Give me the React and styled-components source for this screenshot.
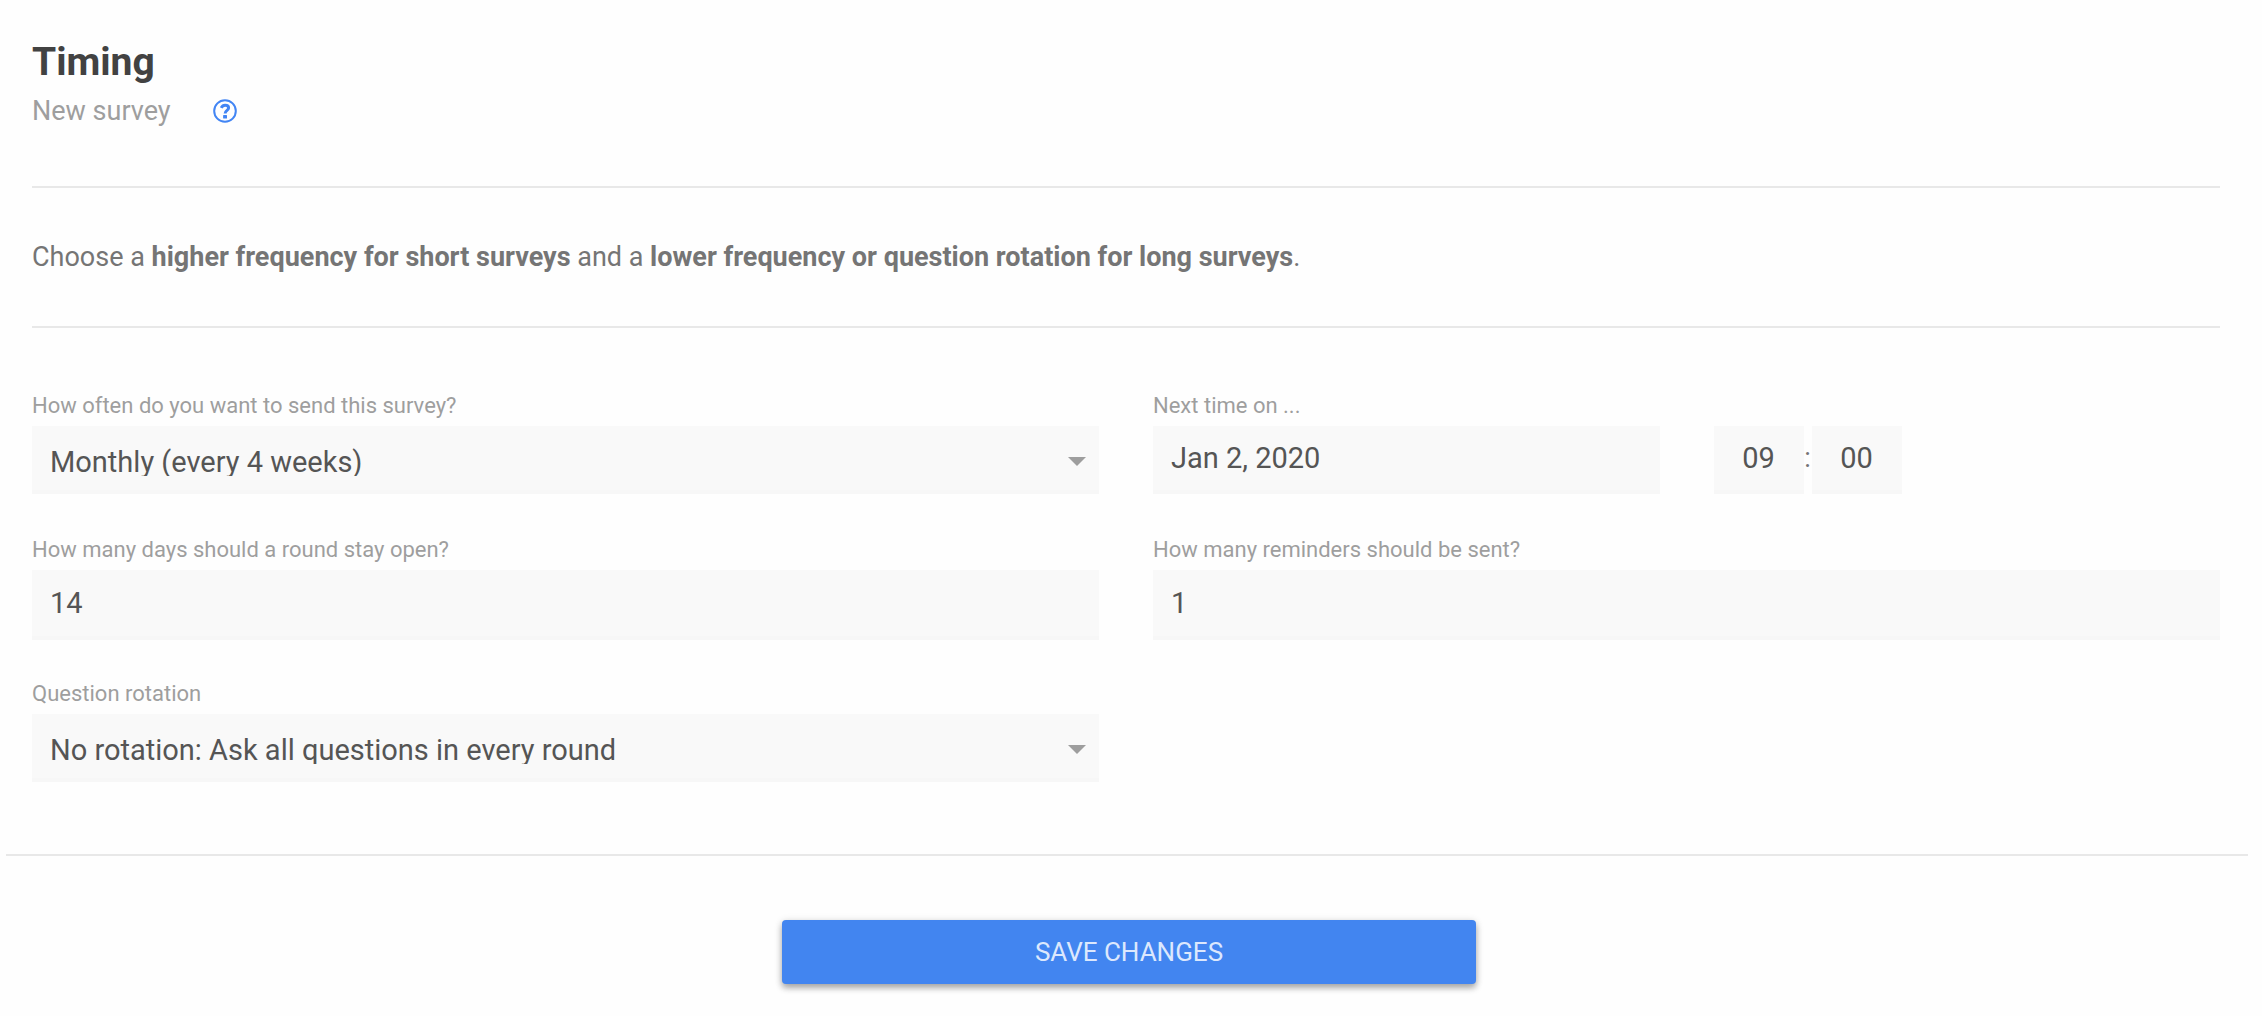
import React, { useState } from 'react';
import styled, { createGlobalStyle } from 'styled-components';

const GlobalStyle = createGlobalStyle`
  * {
    box-sizing: border-box;
  }

  body {
    margin: 0;
    background: #fefefe;
    color: #424242;
    font-family: Roboto, 'Liberation Sans', sans-serif;
  }
`;

const Form = styled.form`
  padding: 38px 14px 32px 6px;
`;

const Content = styled.div`
  padding: 0 28px 0 26px;
`;

const Title = styled.h1`
  margin: 0;
  font-size: 39px;
  line-height: 48px;
  font-weight: 700;
`;

const SubTitle = styled.div`
  display: flex;
  align-items: center;
  gap: 42px;
  height: 50px;
  color: #9e9e9e;
  font-size: 27px;
`;

const HelpButton = styled.button`
  display: flex;
  padding: 0;
  border: none;
  background: none;
  color: #4285f4;
  cursor: pointer;
`;

const Rule = styled.hr`
  margin: 0;
  border: none;
  border-top: 2px solid #e8e8e8;
`;

const Header = styled.header`
  padding-bottom: 50px;
`;

const Intro = styled.p`
  margin: 0;
  padding: 52px 0;
  color: #757575;
  font-size: 27px;
  line-height: 34px;
`;

const Fields = styled.div`
  display: grid;
  grid-template-columns: 1fr 1fr;
  grid-auto-rows: 102px;
  gap: 42px 54px;
  padding: 64px 0 72px;
`;

const Field = styled.div`
  min-width: 0;
`;

const Label = styled.label`
  display: block;
  padding-bottom: 6px;
  color: #9e9e9e;
  font-size: 22px;
  line-height: 28px;
`;

const Input = styled.input`
  display: block;
  width: 100%;
  height: 70px;
  padding: 0 18px;
  border: none;
  border-bottom: 4px solid #f7f7f7;
  border-radius: 0;
  outline: none;
  background: #f9f9f9;
  color: #555;
  font-family: inherit;
  font-size: 29px;
`;

const DateInput = styled(Input)`
  height: 68px;
`;

const TimeInput = styled(DateInput)`
  width: 90px;
  padding: 0;
  text-align: center;
`;

const SelectBox = styled.div`
  display: flex;
  align-items: flex-start;
  position: relative;
  height: 68px;
  border-bottom: 4px solid #f7f7f7;
  background: #f9f9f9;
`;

/* shorter than its box, so the descenders are cut */
const Select = styled.select`
  appearance: none;
  width: 100%;
  height: 50px;
  padding: 19px 60px 0 18px;
  border: none;
  outline: none;
  background: none;
  color: #555;
  font-family: inherit;
  font-size: 29px;
`;

const Arrow = styled.span`
  position: absolute;
  top: 31px;
  right: 13px;
  border: 9px solid transparent;
  border-top-color: #9e9e9e;
  border-bottom: none;
  pointer-events: none;
`;

const DateTime = styled.div`
  display: grid;
  grid-template-columns: 1fr 1fr;
  gap: 54px;
`;

const Time = styled.div`
  display: flex;
  align-items: center;
`;

const Colon = styled.span`
  width: 8px;
  padding-bottom: 4px;
  color: #757575;
  font-size: 27px;
  text-align: center;
`;

const Footer = styled.footer`
  display: flex;
  justify-content: center;
  padding: 64px 0 0 4px;
`;

const SaveButton = styled.button`
  width: 31%;
  height: 64px;
  border: none;
  border-radius: 4px;
  background: #4285f0;
  box-shadow: 0 4px 6px rgba(0, 0, 0, 0.3), 0 1px 8px rgba(0, 0, 0, 0.12);
  color: #dce8fd;
  font-family: inherit;
  font-size: 26px;
  text-transform: uppercase;
  cursor: pointer;
`;

const frequencies = ['Weekly', 'Every 2 weeks', 'Monthly (every 4 weeks)', 'Quarterly'];

const rotations = [
  'No rotation: Ask all questions in every round',
  'Rotate: Ask some questions in every round',
];

const HelpIcon = () => (
  <svg width="24" height="24" viewBox="0 0 24 24" fill="none" stroke="currentColor">
    <circle cx="12" cy="12" r="10.8" strokeWidth="2" />
    <path
      d="M8.2 8.9C9.2 7 10.4 6.3 12.1 6.3c2 0 3.5 1.1 3.5 2.7 0 2.5-3.5 2.3-3.5 5.6"
      strokeWidth="3"
    />
    <rect x="10.1" y="15.9" width="3.9" height="3.5" rx="0.5" fill="currentColor" stroke="none" />
  </svg>
);

const Dropdown = ({ id, label, options, initial }) => {
  const [value, setValue] = useState(initial);

  return (
    <Field>
      <Label htmlFor={id}>{label}</Label>
      <SelectBox>
        <Select id={id} value={value} onChange={e => setValue(e.target.value)}>
          {options.map(option => (
            <option key={option}>{option}</option>
          ))}
        </Select>
        <Arrow />
      </SelectBox>
    </Field>
  );
};

const TextField = ({ id, label, initial }) => (
  <Field>
    <Label htmlFor={id}>{label}</Label>
    <Input id={id} type="text" defaultValue={initial} />
  </Field>
);

const App = () => (
  <Form onSubmit={e => e.preventDefault()}>
    <GlobalStyle />
    <Content>
      <Header>
        <Title>Timing</Title>
        <SubTitle>
          New survey
          <HelpButton type="button" aria-label="Help">
            <HelpIcon />
          </HelpButton>
        </SubTitle>
      </Header>
      <Rule />
      <Intro>
        Choose a <b>higher frequency for short surveys</b> and a{' '}
        <b>lower frequency or question rotation for long surveys</b>.
      </Intro>
      <Rule />
      <Fields>
        <Dropdown
          id="frequency"
          label="How often do you want to send this survey?"
          options={frequencies}
          initial={frequencies[2]}
        />
        <Field>
          <Label htmlFor="date">Next time on ...</Label>
          <DateTime>
            <DateInput id="date" type="text" defaultValue="Jan 2, 2020" />
            <Time>
              <TimeInput type="text" aria-label="Hour" defaultValue="09" />
              <Colon>:</Colon>
              <TimeInput type="text" aria-label="Minute" defaultValue="00" />
            </Time>
          </DateTime>
        </Field>
        <TextField id="days" label="How many days should a round stay open?" initial="14" />
        <TextField id="reminders" label="How many reminders should be sent?" initial="1" />
        <Dropdown
          id="rotation"
          label="Question rotation"
          options={rotations}
          initial={rotations[0]}
        />
      </Fields>
    </Content>
    <Rule />
    <Footer>
      <SaveButton type="submit">Save changes</SaveButton>
    </Footer>
  </Form>
);

export default App;
